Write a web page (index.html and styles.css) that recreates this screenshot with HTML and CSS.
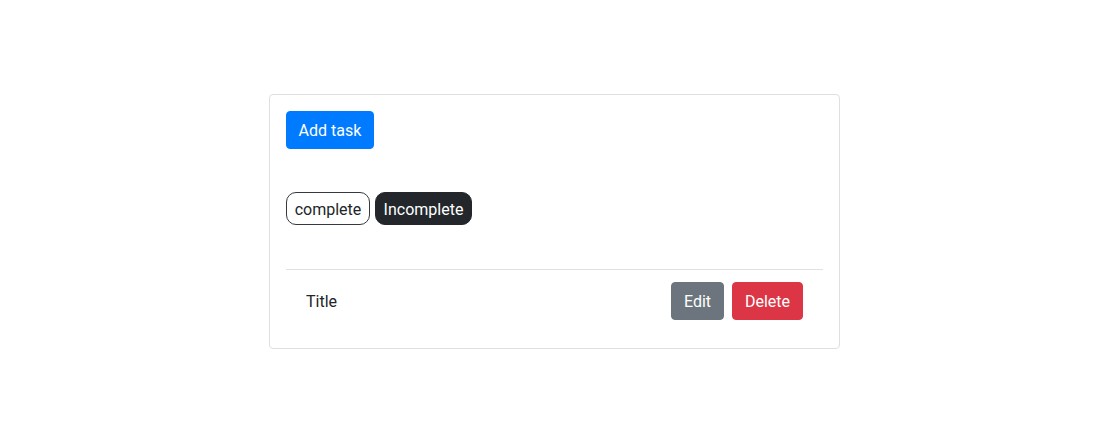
FILE: index.html
```html
<!DOCTYPE html>
<html>
<head>
<meta charset="utf-8">
<link rel="stylesheet" href="styles.css">
</head>
<body>
<div class="card">
  <div class="top">
    <button class="btn btn-primary add">Add task</button>
  </div>
  <div class="filters">
    <span class="pill pill-outline">complete</span>
    <span class="pill pill-dark">Incomplete</span>
  </div>
  <ul class="list">
    <li class="item">
      <span class="title">Title</span>
      <div class="actions">
        <button class="btn btn-secondary edit">Edit</button>
        <button class="btn btn-danger del">Delete</button>
      </div>
    </li>
  </ul>
</div>
</body>
</html>
```
FILE: styles.css
```css
html, body {
  margin: 0;
  padding: 0;
  background: #fff;
}
body {
  font-family: "Segoe UI", Roboto, "Noto Sans", "Liberation Sans", sans-serif;
  font-size: 16px;
  line-height: 24px;
  color: #212529;
  padding-top: 94px;
}
.card {
  width: 571px;
  box-sizing: border-box;
  margin: 0 auto;
  border: 1px solid #dfdfdf;
  border-radius: 4px;
  padding: 16px;
}
.top {
  display: flex;
}
.btn {
  font-family: inherit;
  font-size: 16px;
  line-height: 24px;
  height: 38px;
  border: 1px solid transparent;
  border-radius: 4px;
  padding: 1px 0 0;
  color: #fff;
  cursor: pointer;
  box-sizing: border-box;
  white-space: nowrap;
  text-align: center;
}
.btn-primary { background: #007bff; border-color: #007bff; }
.btn-secondary { background: #6c757d; border-color: #6c757d; }
.btn-danger { background: #dc3545; border-color: #dc3545; }
.add { width: 88px; }
.edit { width: 53px; }
.del { width: 71px; }
.filters {
  display: flex;
  gap: 5px;
  margin-top: 43px;
}
.pill {
  box-sizing: border-box;
  height: 33px;
  line-height: 31px;
  padding: 1px 0 0;
  border-radius: 10px;
  border: 1px solid #343a40;
  text-align: center;
  white-space: nowrap;
}
.pill-outline { width: 84px; color: #212529; background: #fff; }
.pill-dark { width: 97px; color: #fff; background: #23272b; border-color: #23272b; }
.list {
  list-style: none;
  margin: 44px 0 0;
  padding: 0;
  border-top: 1px solid #dee2e6;
}
.item {
  display: flex;
  align-items: center;
  justify-content: space-between;
  padding: 12px 20px;
}
.title {
  padding-top: 1px;
}
.actions {
  display: flex;
  gap: 8px;
}
```
